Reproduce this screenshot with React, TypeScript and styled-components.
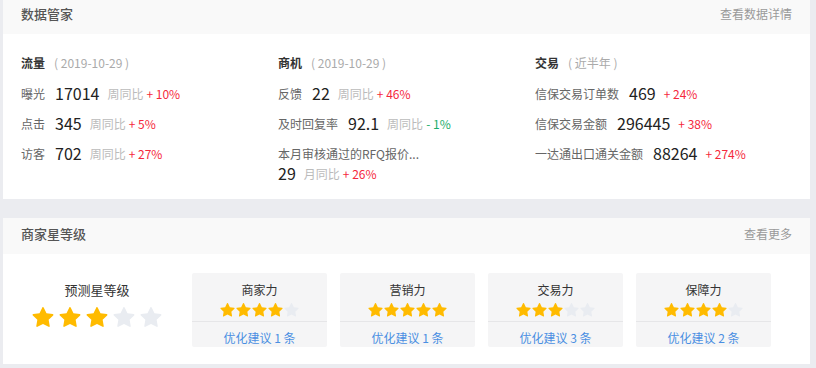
import React from 'react';
import styled, {createGlobalStyle} from 'styled-components';

const GlobalStyle = createGlobalStyle`
  html, body {
    margin: 0;
    padding: 0;
    background: #ebecf0;
  }
  body {
    font-family: "Noto Sans CJK SC", "Noto Sans", sans-serif;
    color: #333;
  }
`

const Page = styled.div`
  width: 807px;
  padding: 0 6px 0 3px;
  margin-top: -2px;
  display: flex;
  flex-direction: column;
  gap: 19px;
`
const Card = styled.section`
  background: #fff;
`
const CardHeader = styled.div`
  height: 36px;
  box-sizing: border-box;
  padding: 7px 18px 0 18px;
  background: #f9f9f9;
  display: flex;
  justify-content: space-between;
  align-items: flex-start;
`
const CardTitle = styled.h3`
  margin: 0;
  font-size: 13px;
  line-height: 18px;
  font-weight: 500;
  color: #555;
`
const CardMore = styled.a`
  font-size: 12px;
  line-height: 18px;
  color: #999;
  cursor: pointer;
`

/* ---------- 数据管家 ---------- */
const DataBody = styled.div`
  display: grid;
  grid-template-columns: repeat(3, 257px);
  padding: 20px 18px 15px 18px;
`
const DataColumn = styled.div`
  display: flex;
  flex-direction: column;
`
const ColumnTitle = styled.div`
  display: flex;
  align-items: center;
  height: 16px;
  margin-bottom: 8px;
`
const ColumnName = styled.span`
  font-size: 12px;
  font-weight: 700;
  color: #333;
`
const ColumnHint = styled.span`
  margin-left: 9px;
  font-size: 12px;
  color: #aaa;
  white-space: pre;
`
const DataRow = styled.div`
  display: flex;
  align-items: center;
  height: 30px;
  white-space: nowrap;
`
const DataLabel = styled.span`
  font-size: 12px;
  color: #666;
`
const DataValue = styled.span<{tight?: boolean}>`
  margin-left: ${p => p.tight ? 0 : 10}px;
  margin-right: 8px;
  font-size: 16px;
  color: #222;
`
const Compare = styled.span`
  font-size: 12px;
  color: #bbb;
  margin-right: 3px;
`
const Change = styled.span<{down?: boolean}>`
  font-size: 12px;
  color: ${p => p.down ? '#1aad6a' : '#f5283c'};
  white-space: pre;
`
const LongItem = styled.div`
  padding-top: 8px;
  display: flex;
  flex-direction: column;
`
const LongLabel = styled(DataLabel)`
  line-height: 16px;
`
const LongValueRow = styled.div`
  display: flex;
  align-items: center;
  height: 22px;
`

/* ---------- 商家星等级 ---------- */
const StarBody = styled.div`
  display: flex;
  padding: 19px 0 17px 18px;
  gap: 13px;
`
const Predict = styled.div`
  width: 152px;
  margin-right: 6px;
  display: flex;
  flex-direction: column;
  align-items: center;
  padding-top: 8px;
`
const PredictTitle = styled.div`
  font-size: 13px;
  line-height: 18px;
  color: #333;
  margin-bottom: 8px;
`
const Stars = styled.div<{big?: boolean}>`
  display: flex;
  gap: ${p => p.big ? 5 : 1}px;
`
const StarSvg = styled.svg<{on: boolean}>`
  display: block;
  fill: ${p => p.on ? '#ffbb00' : '#e9ecf1'};
`
const PowerBox = styled.div`
  width: 135px;
  background: #f5f5f6;
  border-radius: 2px;
  display: flex;
  flex-direction: column;
`
const PowerTop = styled.div`
  height: 49px;
  box-sizing: border-box;
  padding-top: 8px;
  border-bottom: 1px solid #e6e6e8;
  display: flex;
  flex-direction: column;
  align-items: center;
`
const PowerName = styled.div`
  font-size: 12px;
  line-height: 17px;
  color: #333;
  margin-bottom: 5px;
`
const PowerLink = styled.a`
  display: block;
  text-align: center;
  font-size: 12px;
  line-height: 19px;
  padding: 6px 0 0;
  color: #4a8fe2;
  cursor: pointer;
`

const starPath = 'M908.1 353.1l-253.9-36.9L540.7 86.1c-3.1-6.3-8.2-11.4-14.5-14.5-15.8-7.8-35-1.3-42.9 14.5L369.8 316.2l-253.9 36.9c-7 1-13.4 4.3-18.3 9.3a32.05 32.05 0 00.6 45.3l183.7 179.1-43.4 252.9a31.95 31.95 0 0046.4 33.7L512 754l227.1 119.4c6.2 3.3 13.4 4.4 20.3 3.2 17.4-3 29.1-19.5 26.1-36.9l-43.4-252.9 183.7-179.1c5-4.9 8.3-11.3 9.3-18.3 2.7-17.5-9.5-33.7-27-36.3z'

const Rate = ({value, big}: {value: number; big?: boolean}) => {
  const size = big ? 22 : 15
  return (
    <Stars big={big}>
      {[1, 2, 3, 4, 5].map(i => (
        <StarSvg key={i} on={i <= value} width={size} height={size} viewBox="64 64 896 896">
          <path d={starPath}/>
        </StarSvg>
      ))}
    </Stars>
  )
}

const flow = [
  {label: '曝光', value: '17014', change: '+ 10%'},
  {label: '点击', value: '345', change: '+ 5%'},
  {label: '访客', value: '702', change: '+ 27%'},
]
const trade = [
  {label: '信保交易订单数', value: '469', change: '+ 24%'},
  {label: '信保交易金额', value: '296445', change: '+ 38%'},
  {label: '一达通出口通关金额', value: '88264', change: '+ 274%'},
]
const powers = [
  {name: '商家力', stars: 4, tips: 1},
  {name: '营销力', stars: 5, tips: 1},
  {name: '交易力', stars: 3, tips: 3},
  {name: '保障力', stars: 4, tips: 2},
]

const App = () => {
  return (
    <>
      <GlobalStyle/>
      <Page>
        <Card>
          <CardHeader>
            <CardTitle>数据管家</CardTitle>
            <CardMore>查看数据详情</CardMore>
          </CardHeader>
          <DataBody>
            <DataColumn>
              <ColumnTitle>
                <ColumnName>流量</ColumnName>
                <ColumnHint>( 2019-10-29 )</ColumnHint>
              </ColumnTitle>
              {flow.map(item => (
                <DataRow key={item.label}>
                  <DataLabel>{item.label}</DataLabel>
                  <DataValue>{item.value}</DataValue>
                  <Compare>周同比</Compare>
                  <Change>{item.change}</Change>
                </DataRow>
              ))}
            </DataColumn>
            <DataColumn>
              <ColumnTitle>
                <ColumnName>商机</ColumnName>
                <ColumnHint>( 2019-10-29 )</ColumnHint>
              </ColumnTitle>
              <DataRow>
                <DataLabel>反馈</DataLabel>
                <DataValue>22</DataValue>
                <Compare>周同比</Compare>
                <Change>+ 46%</Change>
              </DataRow>
              <DataRow>
                <DataLabel>及时回复率</DataLabel>
                <DataValue>92.1</DataValue>
                <Compare>周同比</Compare>
                <Change down>- 1%</Change>
              </DataRow>
              <LongItem>
                <LongLabel>本月审核通过的RFQ报价...</LongLabel>
                <LongValueRow>
                  <DataValue tight>29</DataValue>
                  <Compare>月同比</Compare>
                  <Change>+ 26%</Change>
                </LongValueRow>
              </LongItem>
            </DataColumn>
            <DataColumn>
              <ColumnTitle>
                <ColumnName>交易</ColumnName>
                <ColumnHint>( 近半年 )</ColumnHint>
              </ColumnTitle>
              {trade.map(item => (
                <DataRow key={item.label}>
                  <DataLabel>{item.label}</DataLabel>
                  <DataValue>{item.value}</DataValue>
                  <Change>{item.change}</Change>
                </DataRow>
              ))}
            </DataColumn>
          </DataBody>
        </Card>

        <Card>
          <CardHeader>
            <CardTitle>商家星等级</CardTitle>
            <CardMore>查看更多</CardMore>
          </CardHeader>
          <StarBody>
            <Predict>
              <PredictTitle>预测星等级</PredictTitle>
              <Rate value={3} big/>
            </Predict>
            {powers.map(p => (
              <PowerBox key={p.name}>
                <PowerTop>
                  <PowerName>{p.name}</PowerName>
                  <Rate value={p.stars}/>
                </PowerTop>
                <PowerLink>优化建议 {p.tips} 条</PowerLink>
              </PowerBox>
            ))}
          </StarBody>
        </Card>
      </Page>
    </>
  );
};

export default App;
